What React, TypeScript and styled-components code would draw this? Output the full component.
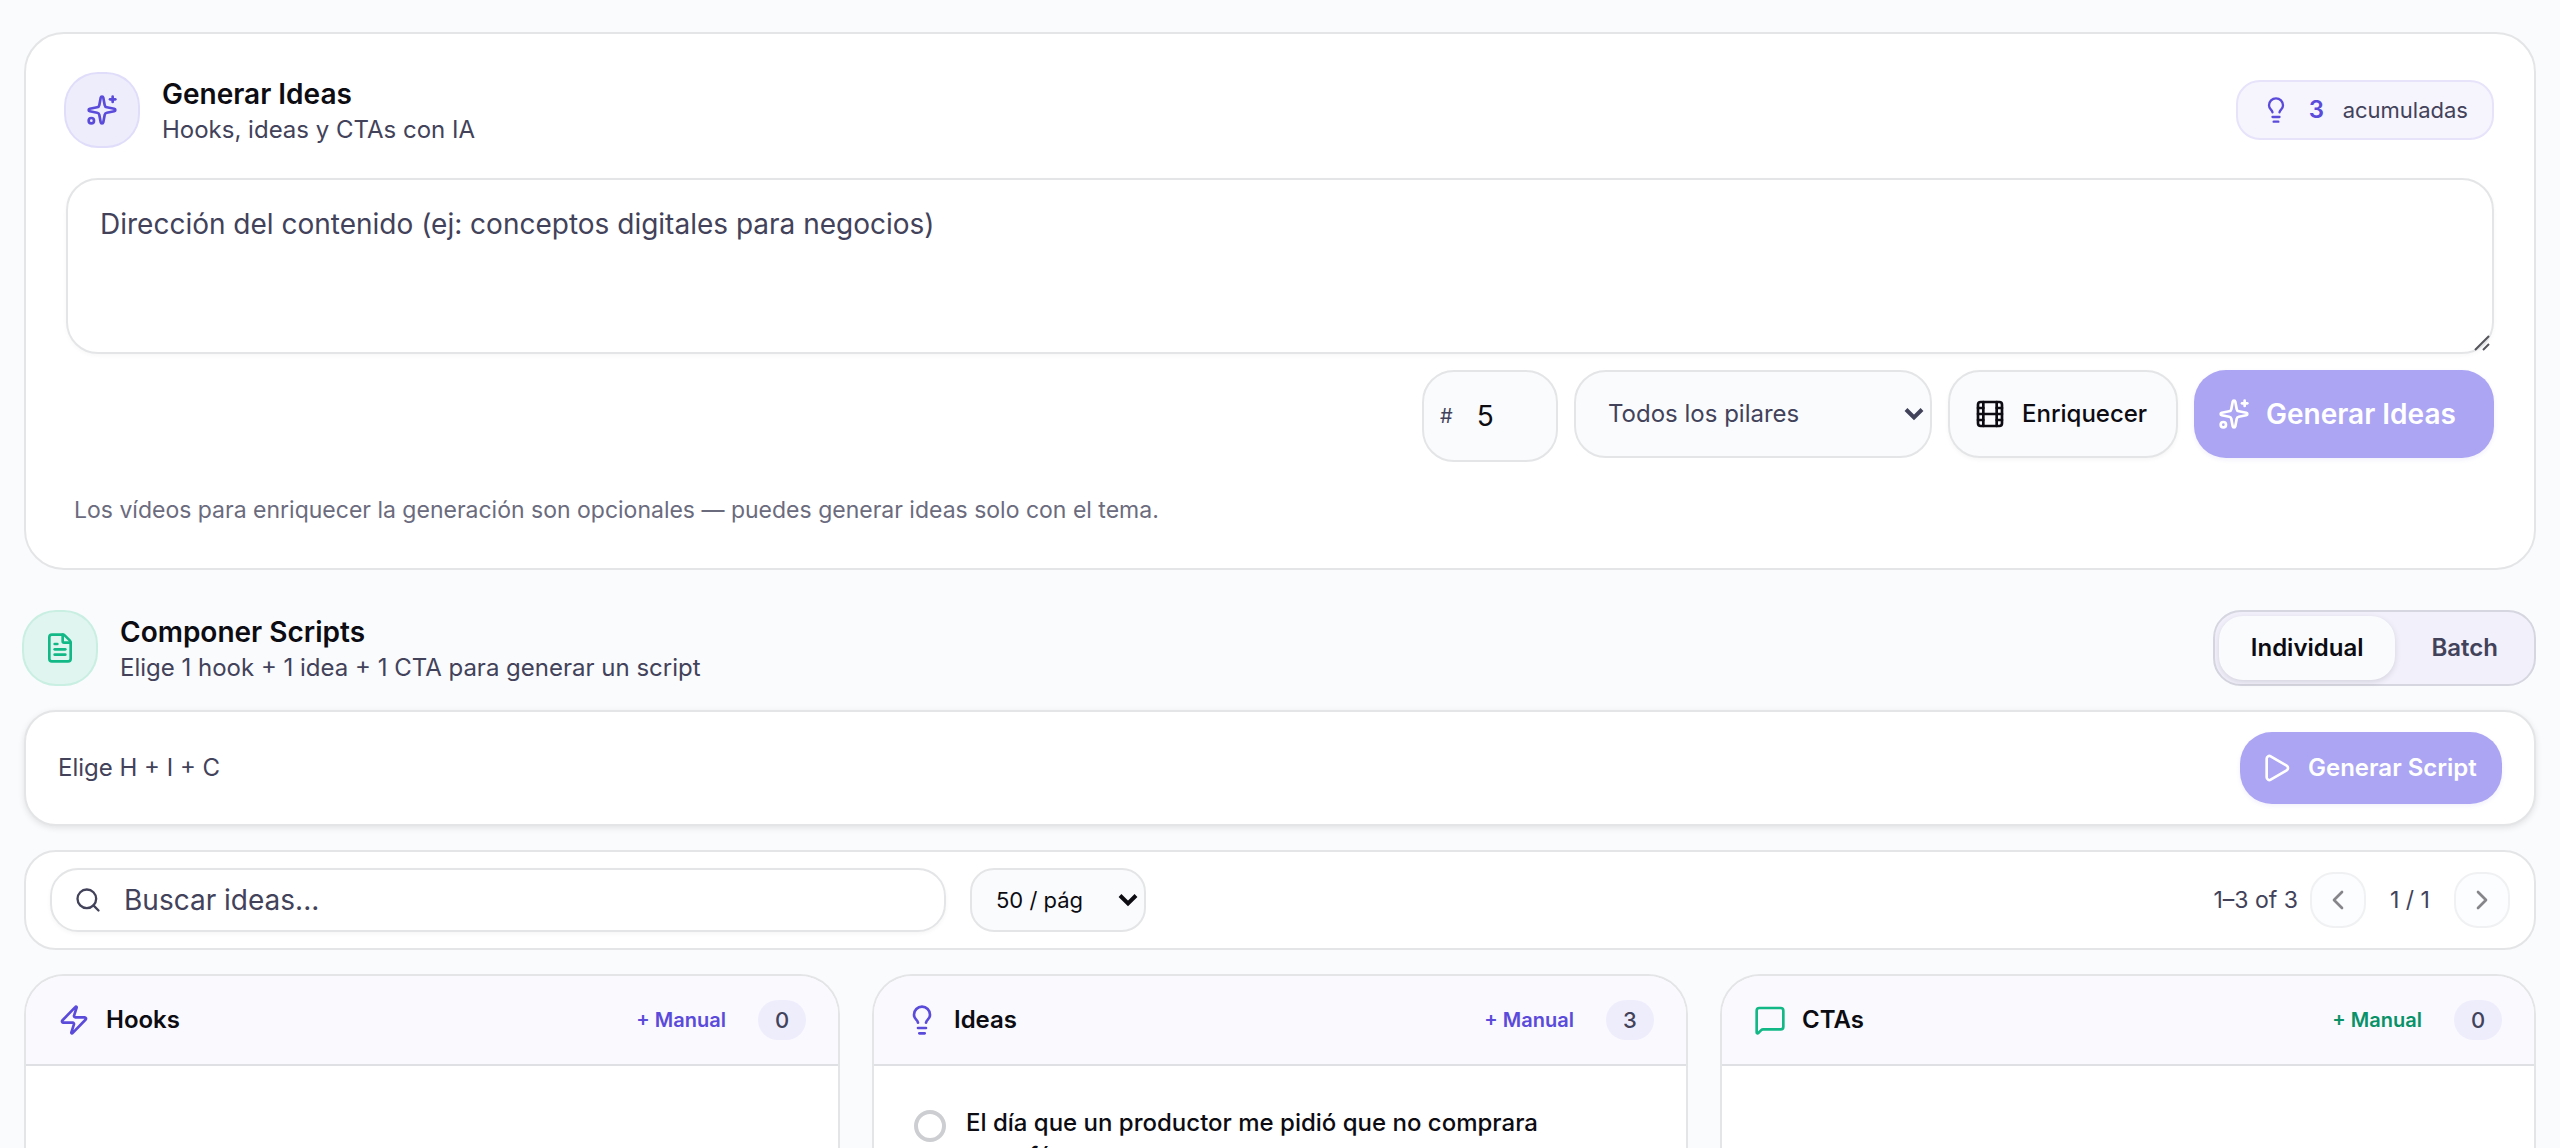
import React from "react";
import styled, { createGlobalStyle } from "styled-components";
import {
  ChevronLeft,
  ChevronRight,
  FileText,
  Film,
  Lightbulb,
  MessageSquare,
  Play,
  Search,
  Sparkles,
  Zap,
} from "lucide-react";

const GlobalStyle = createGlobalStyle`
  *, *::before, *::after { box-sizing: border-box; }
  body {
    margin: 0;
    background: #fafbfd;
    color: #0c0c12;
    font-family: Inter, "Noto Sans", sans-serif;
    font-size: 24px;
    line-height: 32px;
    overflow: hidden;
  }
  button, input, select, textarea { font: inherit; color: inherit; margin: 0; }
  h2, h3, p { margin: 0; }
`;

const palette = {
  violet: "#5b4bdb",
  lilac: "#aca5f3",
  green: "#12b886",
  deepGreen: "#099268",
  ink: "#0c0c12",
  slate: "#42425a",
  muted: "#6b6b7e",
  line: "#e4e5e7",
  surface: "#fafbfd",
};

const Page = styled.main`
  height: 100vh;
  overflow: hidden;
  padding: 32px 24px 0;
  display: flex;
  flex-direction: column;
`;

const GeneratorCard = styled.section`
  display: flex;
  flex-direction: column;
  gap: 16px;
  padding: 40px;
  background: #fff;
  border: 2px solid ${palette.line};
  border-radius: 40px;
`;

const SectionHeader = styled.header`
  display: flex;
  align-items: center;
  gap: 24px;
`;

const IconTile = styled.span<{ $tone: "violet" | "green" }>`
  display: grid;
  place-items: center;
  width: 72px;
  height: 72px;
  border-radius: 32px;
  color: ${(p) => (p.$tone === "violet" ? palette.violet : palette.green)};
  background: ${(p) => (p.$tone === "violet" ? "#eeedfc" : "#e0f5ef")};
  box-shadow: 0 0 0 2px ${(p) => (p.$tone === "violet" ? "#e0ddfa" : "#c9eee2")};
`;

const HeaderText = styled.div`
  flex: 1;
`;

const Title = styled.h2`
  font-size: 28px;
  line-height: 40px;
  font-weight: 600;
`;

const Subtitle = styled.p`
  color: ${palette.slate};
`;

const CountPill = styled.div`
  display: flex;
  align-items: center;
  justify-content: space-between;
  gap: 16px;
  min-width: 258px;
  height: 60px;
  padding: 0 24px;
  border: 2px solid #e6e3fa;
  border-radius: 24px;
  background: #f6f5fd;
  color: ${palette.slate};
  font-size: 22px;
  svg, strong { color: ${palette.violet}; }
  strong { font-size: 24px; font-weight: 600; }
`;

const Direction = styled.textarea`
  display: block;
  width: 100%;
  height: 176px;
  padding: 24px 32px;
  border: 2px solid ${palette.line};
  border-radius: 32px;
  background: #fff;
  box-shadow: 0 2px 4px rgba(0, 0, 0, 0.03);
  font-size: 28px;
  line-height: 40px;
  resize: none;
  &::placeholder { color: ${palette.slate}; opacity: 1; }
`;

const DirectionWrap = styled.div`
  position: relative;
  margin-top: 16px;
`;

const Grip = styled.svg`
  position: absolute;
  right: 2px;
  bottom: 2px;
`;

const ControlRow = styled.div`
  display: flex;
  justify-content: flex-end;
  align-items: flex-start;
  gap: 16px;
`;

const AmountField = styled.label`
  display: flex;
  align-items: center;
  gap: 8px;
  width: 136px;
  height: 92px;
  padding: 0 16px;
  border: 2px solid ${palette.line};
  border-radius: 32px;
  background: ${palette.surface};
  color: ${palette.slate};
  font-size: 20px;
  input {
    flex: 1;
    min-width: 0;
    padding: 0 16px;
    border: 0;
    background: transparent;
    color: ${palette.ink};
    font-size: 28px;
    line-height: 40px;
    appearance: textfield;
  }
`;

const SelectShell = styled.span<{ $color: string }>`
  position: relative;
  display: flex;
  align-items: center;
  color: ${(p) => p.$color};
`;

const SelectBox = styled.select<{ $compact?: boolean }>`
  appearance: none;
  width: ${(p) => (p.$compact ? "176px" : "358px")};
  height: ${(p) => (p.$compact ? "64px" : "88px")};
  padding: 0 ${(p) => (p.$compact ? "24px" : "32px")};
  border: 2px solid ${palette.line};
  border-radius: ${(p) => (p.$compact ? "24px" : "32px")};
  background: ${palette.surface};
  font-size: ${(p) => (p.$compact ? "22px" : "24px")};
`;

const SelectArrow = styled.svg`
  position: absolute;
  right: 8px;
  pointer-events: none;
`;

const SoftButton = styled.button`
  display: flex;
  align-items: center;
  gap: 16px;
  min-width: 230px;
  height: 88px;
  padding: 0 24px;
  border: 2px solid ${palette.line};
  border-radius: 32px;
  background: ${palette.surface};
  box-shadow: 0 2px 4px rgba(0, 0, 0, 0.04);
  font-weight: 500;
`;

const PrimaryButton = styled.button<{ $large?: boolean }>`
  display: flex;
  align-items: center;
  gap: 16px;
  min-width: ${(p) => (p.$large ? "300px" : "262px")};
  height: ${(p) => (p.$large ? "88px" : "72px")};
  padding: 0 ${(p) => (p.$large ? "24px" : "20px")};
  border: 0;
  border-radius: 32px;
  background: ${palette.lilac};
  box-shadow: 0 2px 4px rgba(91, 75, 219, 0.08);
  color: #fff;
  font-size: ${(p) => (p.$large ? "28px" : "24px")};
  font-weight: 600;
`;

const Hint = styled.p`
  padding: 16px 8px 2px;
  color: ${palette.muted};
  font-size: 23px;
`;

const ComposeHeader = styled(SectionHeader)`
  margin-top: 40px;
`;

const Segmented = styled.div`
  display: flex;
  gap: 4px;
  padding: 4px;
  border: 2px solid #d6d6e0;
  border-radius: 28px;
  background: #f1f0fb;
`;

const Segment = styled.button<{ $active?: boolean }>`
  height: 64px;
  padding: 0 32px;
  border: 0;
  border-radius: 24px;
  background: ${(p) => (p.$active ? palette.surface : "transparent")};
  box-shadow: ${(p) => (p.$active ? "0 2px 6px rgba(0, 0, 0, 0.12)" : "none")};
  color: ${(p) => (p.$active ? palette.ink : palette.slate)};
  font-weight: 600;
`;

const Panel = styled.section`
  display: flex;
  align-items: center;
  border: 2px solid ${palette.line};
  border-radius: 32px;
  background: #fff;
`;

const SelectionBar = styled(Panel)`
  justify-content: space-between;
  margin-top: 24px;
  padding: 20px 32px;
  box-shadow: 0 2px 6px rgba(0, 0, 0, 0.1);
  color: ${palette.slate};
`;

const FilterBar = styled(Panel)`
  gap: 24px;
  margin-top: 24px;
  padding: 16px 24px;
`;

const SearchField = styled.label`
  display: flex;
  align-items: center;
  gap: 22px;
  flex: 0 1 896px;
  height: 64px;
  padding: 0 22px;
  border: 2px solid ${palette.line};
  border-radius: 28px;
  box-shadow: 0 2px 4px rgba(0, 0, 0, 0.04);
  color: ${palette.slate};
  input {
    flex: 1;
    min-width: 0;
    padding: 0;
    border: 0;
    background: transparent;
    font-size: 28px;
  }
  input::placeholder { color: ${palette.slate}; opacity: 1; }
`;

const Pager = styled.nav`
  display: flex;
  align-items: center;
  gap: 12px;
  margin-left: auto;
  color: ${palette.slate};
  font-size: 23px;
`;

const PageNumber = styled.span`
  min-width: 64px;
  text-align: center;
`;

const PageButton = styled.button`
  display: grid;
  place-items: center;
  width: 56px;
  height: 56px;
  padding: 0;
  border: 2px solid #f0f1f3;
  border-radius: 24px;
  background: #fcfdfe;
  color: #85858a;
`;

const Board = styled.div`
  display: grid;
  grid-template-columns: repeat(3, minmax(0, 1fr));
  gap: 32px;
  flex: 1;
  margin-top: 24px;
`;

const Column = styled.section`
  border: 2px solid ${palette.line};
  border-bottom: 0;
  border-radius: 40px 40px 0 0;
  background: #fff;
  overflow: hidden;
`;

const ColumnHeader = styled.header<{ $color: string }>`
  display: flex;
  align-items: center;
  gap: 16px;
  height: 90px;
  padding: 0 32px;
  border-bottom: 2px solid #dfe0e4;
  background: #faf9fe;
  svg { color: ${(p) => p.$color}; }
`;

const ColumnTitle = styled.h3`
  flex: 1;
  font-size: 24px;
  font-weight: 600;
`;

const ManualButton = styled.button<{ $color: string }>`
  padding: 0 16px;
  border: 0;
  background: transparent;
  color: ${(p) => p.$color};
  font-size: 20px;
  font-weight: 600;
`;

const Badge = styled.span`
  min-width: 48px;
  padding: 4px 0;
  border-radius: 20px;
  background: #eeedfc;
  color: ${palette.slate};
  font-size: 22px;
  font-weight: 500;
  text-align: center;
`;

const IdeaOption = styled.label`
  display: flex;
  align-items: flex-start;
  gap: 20px;
  padding: 40px 136px 0 40px;
  font-weight: 500;
  line-height: 33px;
`;

const IdeaRadio = styled.input`
  appearance: none;
  flex: none;
  width: 32px;
  height: 32px;
  margin: 4px 0 0;
  border: 4px solid #cdced1;
  border-radius: 50%;
`;

function Arrow() {
  return (
    <SelectArrow width="20" height="14" viewBox="0 0 20 14" fill="none" stroke="currentColor" strokeWidth="4" aria-hidden="true">
      <path d="M2 2.5l8 8 8-8" />
    </SelectArrow>
  );
}

const columns = [
  { name: "Hooks", Icon: Zap, color: palette.violet, action: palette.violet, ideas: [] as string[], count: 0 },
  {
    name: "Ideas",
    Icon: Lightbulb,
    color: palette.violet,
    action: palette.violet,
    ideas: ["El día que un productor me pidió que no comprara un café"],
    count: 3,
  },
  { name: "CTAs", Icon: MessageSquare, color: palette.green, action: palette.deepGreen, ideas: [] as string[], count: 0 },
];

export default function App() {
  return (
    <Page>
      <GlobalStyle />
      <GeneratorCard>
        <SectionHeader>
          <IconTile $tone="violet"><Sparkles size={32} /></IconTile>
          <HeaderText>
            <Title>Generar Ideas</Title>
            <Subtitle>Hooks, ideas y CTAs con IA</Subtitle>
          </HeaderText>
          <CountPill>
            <Lightbulb size={28} />
            <strong>3</strong>
            <span>acumuladas</span>
          </CountPill>
        </SectionHeader>
        <DirectionWrap>
          <Direction aria-label="Dirección del contenido" placeholder="Dirección del contenido (ej: conceptos digitales para negocios)" />
          <Grip width="18" height="18" viewBox="0 0 18 18" stroke="#55555c" strokeWidth="2" aria-hidden="true">
            <path d="M1 16L15 2M9 16l6-6" />
          </Grip>
        </DirectionWrap>
        <ControlRow>
          <AmountField>
            #
            <input type="number" defaultValue={5} aria-label="Cantidad" />
          </AmountField>
          <SelectShell $color={palette.slate}>
            <SelectBox aria-label="Pilar"><option>Todos los pilares</option></SelectBox>
            <Arrow />
          </SelectShell>
          <SoftButton type="button"><Film size={32} />Enriquecer</SoftButton>
          <PrimaryButton type="button" $large><Sparkles size={32} />Generar Ideas</PrimaryButton>
        </ControlRow>
        <Hint>Los vídeos para enriquecer la generación son opcionales — puedes generar ideas solo con el tema.</Hint>
      </GeneratorCard>

      <ComposeHeader>
        <IconTile $tone="green"><FileText size={32} /></IconTile>
        <HeaderText>
          <Title>Componer Scripts</Title>
          <Subtitle>Elige 1 hook + 1 idea + 1 CTA para generar un script</Subtitle>
        </HeaderText>
        <Segmented>
          <Segment type="button" $active>Individual</Segment>
          <Segment type="button">Batch</Segment>
        </Segmented>
      </ComposeHeader>

      <SelectionBar>
        <span>Elige H + I + C</span>
        <PrimaryButton type="button"><Play size={32} />Generar Script</PrimaryButton>
      </SelectionBar>

      <FilterBar>
        <SearchField>
          <Search size={28} />
          <input type="text" placeholder="Buscar ideas..." aria-label="Buscar ideas" />
        </SearchField>
        <SelectShell $color={palette.ink}>
          <SelectBox $compact aria-label="Ideas por página"><option>50 / pág</option></SelectBox>
          <Arrow />
        </SelectShell>
        <Pager aria-label="Paginación">
          <span>1–3 of 3</span>
          <PageButton type="button" aria-label="Anterior"><ChevronLeft size={32} /></PageButton>
          <PageNumber>1 / 1</PageNumber>
          <PageButton type="button" aria-label="Siguiente"><ChevronRight size={32} /></PageButton>
        </Pager>
      </FilterBar>

      <Board>
        {columns.map(({ name, Icon, color, action, ideas, count }) => (
          <Column key={name}>
            <ColumnHeader $color={color}>
              <Icon size={32} />
              <ColumnTitle>{name}</ColumnTitle>
              <ManualButton type="button" $color={action}>+ Manual</ManualButton>
              <Badge>{count}</Badge>
            </ColumnHeader>
            {ideas.map((idea) => (
              <IdeaOption key={idea}>
                <IdeaRadio type="radio" name="idea" />
                <span>{idea}</span>
              </IdeaOption>
            ))}
          </Column>
        ))}
      </Board>
    </Page>
  );
}
